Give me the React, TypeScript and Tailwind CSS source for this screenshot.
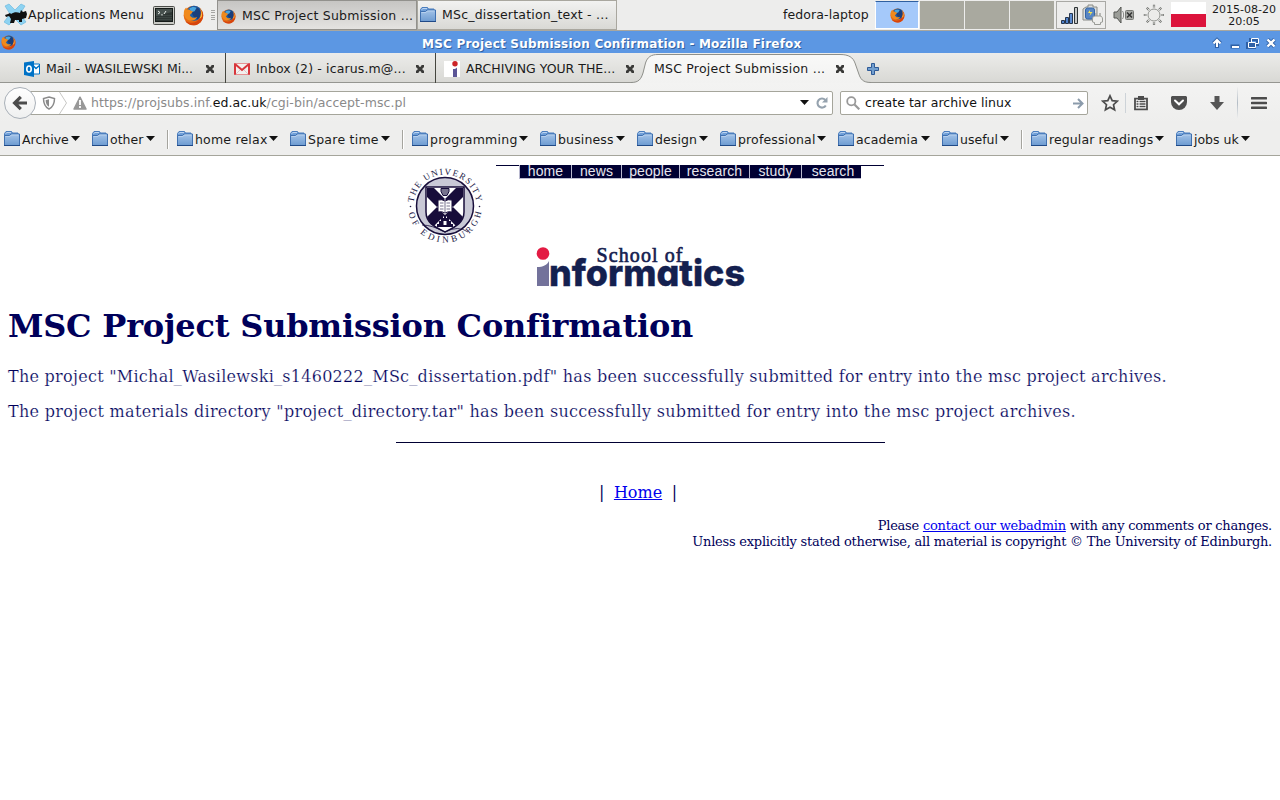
import React from "react";

const Firefox = ({ size }: { size: number }) => (
  <svg width={size} height={size} viewBox="0 0 20 20" className="block shrink-0">
    <circle cx="10" cy="10" r="9.4" fill="#e66a12" />
    <circle cx="10.6" cy="7.8" r="7.2" fill="#1d5fa8" />
    <path d="M8 2.2C12 .6 16 3 16.8 7c.4 3-1 5.4-3 6.6C11 13 9 10 8 7z" fill="#1b3f7c" />
    <path d="M6 3.4C8 1.6 11 1.4 13 2.6L11 6 8 7z" fill="#4aa5dd" />
    <path d="M.8 7C1 5 1.8 3.400 3 2.400l.5 2C5 4.200 6.500 4.500 7.500 5.500L9.500 6.300 8 8.200 6.500 9.500c1 2.500 4 3.500 7 2-1 3-5 4-8 3C2.500 13.500.6 10.500.8 7z" fill="#f08a1c" />
    <path d="M16.600 4c2 2 3 5 2.300 8.200-1 4-4.500 7.200-8.900 7.200-3.500 0-6.500-1.900-8-4.700 3 2.300 7 3 10.400 1.300C16 14 17.600 9.500 16.600 4z" fill="#d6440f" />
    <path d="M16.200 3.400c1.600 3.200 1.500 6.600-.5 9.600 1-.3 1.600-.9 2.200-1.800.5-3-.1-5.800-1.700-7.800z" fill="#ffcb3a" />
  </svg>
);

const Folder = () => (
  <svg width="16" height="16" viewBox="0 0 16 16" className="block shrink-0">
    <defs>
      <linearGradient id="folder" x1="0" y1="0" x2="0" y2="1">
        <stop offset="0" stopColor="#a3c3e8" />
        <stop offset="1" stopColor="#6d9bd1" />
      </linearGradient>
    </defs>
    <path d="M.5 14V2.500L2 .5h5.500L8.500 2h5.500v2" fill="#6f9fd8" stroke="#4a7dbd" />
    <path d="M1.500 2.600 3 1.500h4" stroke="#bdd4f0" fill="none" />
    <path d="M.5 4.500h5l1.500-1.500h8.500v11.500H.5z" fill="url(#folder)" stroke="#3f70b0" />
    <path d="M1.500 5.500h4.500L7.500 4h7" stroke="#b7d0ee" fill="none" />
    <path d="M0 14.500h16" stroke="#204a87" />
  </svg>
);

const Caret = () => (
  <svg width="9" height="5" viewBox="0 0 9 5" className="block shrink-0">
    <path d="M0 0h9L4.500 5z" fill="#111" />
  </svg>
);

const CloseX = () => (
  <svg width="10" height="10" viewBox="0 0 10 10" className="block shrink-0">
    <path d="M2 2.200 8 7.800M8 2.200 2 7.800" stroke="#3a3a38" strokeWidth="2.700" strokeLinecap="butt" />
    <path d="M1 1h2.500v2H1zM6.500 1H9v2H6.500zM1 7h2.500v2H1zM6.500 7H9v2H6.500z" fill="#3a3a38" />
  </svg>
);

const Bookmark = ({ label, box, text }: { label: string; box: string; text: string }) => (
  <div className={`flex shrink-0 items-center ${box}`}>
    <Folder />
    <span className={`ml-[2px] mt-[2px] shrink-0 ${text}`}>{label}</span>
    <span className="-mt-px ml-px">
      <Caret />
    </span>
  </div>
);

const Divider = () => <div className="h-[19px] w-[10px] shrink-0 border-l border-[#a5a49e] shadow-[inset_1px_0_0_#fff]" />;

const Panel = () => (
  <div className="flex h-[31px] shrink-0 border-b border-[#a9a79f] bg-[#ededec]">
    <svg width="24" height="26" viewBox="0 0 24 26" className="ml-[4px] mt-[2px] block shrink-0">
      <path d="M1 4l4-2 6 6 6-6 4 2-5 8 6 8-5 3-6-6-6 6-5-3 6-8z" fill="#8ed3f2" stroke="#62b4dc" strokeWidth=".6" />
      <path d="M4 12l2-1 1 1c3-2 6-2 9-1l1-3 2 2 3-1 1 3-1 4-4 1v3h-3v-2h-4l-1 3H6l1-4-2-3-3 1-1-2z" fill="#111" />
    </svg>
    <span className="w-[124px] shrink-0 pt-[7px] leading-4 tracking-[0.08px]">Applications Menu</span>
    <svg width="22" height="19" viewBox="0 0 22 19" className="ml-[1px] mt-[6px] block shrink-0">
      <rect x=".5" y=".5" width="21" height="18" rx="1" fill="#c9cac5" stroke="#4b4d49" />
      <rect x="2.500" y="2.500" width="17" height="13" fill="#2e3634" stroke="#151b19" />
      <path d="M3 10 19 6V3H3z" fill="#46504d" />
      <path d="m5 5 2 1.500L5 8M8 9h2M11 8l2-3" stroke="#e8eeea" strokeWidth="1" fill="none" />
      <path d="M3 11.500h16M3 13.500h16M3 9.500h16" stroke="#4b5652" strokeWidth=".5" />
    </svg>
    <div className="ml-[8px] mt-[5px]">
      <Firefox size={21} />
    </div>
    <div className="ml-[7px] mt-[10px] flex h-[10px] w-[6px] shrink-0 flex-col justify-between">
      <i className="block h-px w-[4px] bg-[#a5a5a3]" />
      <i className="block h-px w-[4px] bg-[#a5a5a3]" />
      <i className="block h-px w-[4px] bg-[#a5a5a3]" />
      <i className="block h-px w-[4px] bg-[#a5a5a3]" />
      <i className="block h-px w-[4px] bg-[#a5a5a3]" />
    </div>
    <div className="flex h-[30px] w-[200px] shrink-0 border border-[#92918d] bg-linear-to-b from-[#c6c5c3] to-[#e4e3e1] pl-[3px]">
      <div className="mt-[8px]">
        <Firefox size={15} />
      </div>
      <span className="ml-[6px] shrink-0 pt-[7px] leading-4 tracking-[0.22px]">MSC Project Submission ...</span>
    </div>
    <div className="flex h-[30px] w-[200px] shrink-0 border border-[#a9a79f] bg-linear-to-b from-[#f2f2f1] to-[#d9d9d5] pl-[2px]">
      <div className="mt-[6px]">
        <Folder />
      </div>
      <span className="ml-[6px] shrink-0 pt-[6px] leading-4 tracking-[0.21px]">MSc_dissertation_text - ...</span>
    </div>
    <span className="ml-[166px] w-[92px] shrink-0 pt-[7px] leading-4 tracking-[0.1px]">fedora-laptop</span>
    <div className="mt-px flex h-[28px] w-[44px] shrink-0 justify-center border border-white border-t-[#2f5f9f] bg-[#a5c9fa] pt-[6px]">
      <Firefox size={15} />
    </div>
    <div className="mt-px flex h-[28px] w-[137px] shrink-0 gap-px pl-px">
      <i className="block w-[44px] bg-[#a9a99f]" />
      <i className="block w-[44px] bg-[#a9a99f]" />
      <i className="block w-[44px] bg-[#a9a99f]" />
    </div>
    <div className="mt-px flex h-[28px] w-[50px] shrink-0 border border-[#a9a9a5]">
      <svg width="18" height="18" viewBox="0 0 18 18" className="ml-[4px] mt-[5px] block">
        <path d="M.5 13.500h3v3h-3zM4.500 10.500h3v6h-3z" fill="#4f82cc" stroke="#26354c" />
        <path d="M8.500 6.500h3v10h-3z" fill="#5d8cd0" stroke="#26354c" />
        <path d="M13.500.5h3v16h-3z" fill="#c4c6c6" stroke="#2e3436" />
      </svg>
      <svg width="22" height="24" viewBox="0 0 22 24" className="ml-[3px] mt-[2px] block">
        <path d="M4 3h2V1h5v2h4v13H1V5z" fill="#dcdedc" stroke="#888a85" />
        <rect x="3.500" y="4" width="9" height="11" rx="2" fill="#5685c4" stroke="#3465a4" />
        <path d="m8 6-2 3h2.500l-1 3 3-4H8z" fill="#fce94f" />
        <path d="M14 13V9M18 13V9" stroke="#a5a7a2" strokeWidth="1.500" />
        <path d="M10.500 18v-3c0-2 1-3 3-3h4c2 0 3 1 3 3v3l-2 .5v2h-6v-2z" fill="#eeeeec" stroke="#999b96" />
      </svg>
    </div>
    <svg width="22" height="20" viewBox="0 0 22 20" className="ml-[7px] mt-[5px] block shrink-0">
      <path d="M1 7h3l4-5v16l-4-5H1z" fill="#9b9d98" stroke="#555753" />
      <path d="M9.500 6c1.500 2 1.500 6 0 8" fill="none" stroke="#888a85" />
      <rect x="12.500" y="5.500" width="8" height="9" rx="1" fill="#a7a9a5" stroke="#777975" />
      <path d="m14 7.500 5 5m0-5-5 5" stroke="#333" strokeWidth="1.500" />
    </svg>
    <svg width="22" height="22" viewBox="0 0 22 22" className="ml-[8px] mt-[4px] block shrink-0">
      <path d="M11 .8v3M11 18v3M.8 11h3M18 11h3M3.800 3.800l2.200 2.200M16 16l2.200 2.200M3.800 18.200 6 16M16 6l2.200-2.200" stroke="#70726e" strokeWidth="2.200" />
      <path d="M11 1.400v3M11 18v2.400M1.400 11h3M18 11h2.400M4.300 4.300 6 6M16 16l1.700 1.700M4.300 17.700 6 16M16 6l1.700-1.700" stroke="#fff" strokeWidth=".8" />
      <circle cx="11" cy="11" r="6" fill="#ececea" stroke="#91938f" />
    </svg>
    <div className="ml-[6px] mt-[2px] h-[25px] w-[35px] shrink-0 bg-linear-to-b from-white from-50% to-[#dc143c] to-50%" />
    <div className="ml-[5px] w-[66px] shrink-0 pt-[4px] text-center text-[11px] leading-[12px]">
      2015-08-20
      <br />
      20:05
    </div>
  </div>
);

const TitleBar = () => (
  <div className="flex h-[22px] shrink-0 bg-[#5c97e3]">
    <div className="ml-px mt-[4px] w-[421px]">
      <Firefox size={15} />
    </div>
    <span className="shrink-0 pt-[5px] text-[12px] leading-4 font-bold tracking-[0.21px] text-white [text-shadow:1px_1px_0_#32619f]">
      MSC Project Submission Confirmation - Mozilla Firefox
    </span>
    <svg width="70" height="14" viewBox="0 0 70 14" className="ml-auto mr-[2px] mt-[5px] block shrink-0" fill="none">
      <path d="M9 12V5M5.500 7.500 9 4l3.500 3.500" stroke="#2f60a5" strokeWidth="4" />
      <path d="M22.500 10.500h9" stroke="#2f60a5" strokeWidth="4" />
      <path d="M42.500 3.500h7v5h-7zM39.500 7.500h7v4h-7z" stroke="#2f60a5" strokeWidth="3" />
      <path d="m59.500 3.500 7 7m0-7-7 7" stroke="#2f60a5" strokeWidth="4" />
      <path d="M9 11V5M5.500 7.500 9 4l3.500 3.500" stroke="#fff" strokeWidth="2" />
      <path d="M24 11h7" stroke="#fff" strokeWidth="2" />
      <path d="M43.500 2.500h7v5h-7z" stroke="#fff" />
      <path d="M40.500 6.500h7v5h-7z" stroke="#fff" fill="#2f60a5" />
      <path d="m59.500 3.500 7 7m0-7-7 7" stroke="#fff" strokeWidth="2.400" />
    </svg>
  </div>
);

const TabStrip = () => (
  <div className="relative flex h-[30px] shrink-0 bg-linear-to-b from-[#ececea] to-[#d8d8d4] shadow-[inset_0_-1px_0_#959691]">
    <div className="flex w-[226px] shrink-0 border-r border-[#45463f] pl-[24px]">
      <svg width="16" height="16" viewBox="0 0 16 16" className="mt-[8px] block shrink-0">
        <path d="M8 3h7.500v10H8z" fill="#fff" stroke="#0072c6" />
        <path d="m9 4.500 3 3 3.500-3" fill="none" stroke="#0072c6" strokeWidth="1.500" />
        <path d="M0 1.500 10 0v16L0 14z" fill="#0072c6" />
        <ellipse cx="5" cy="8" rx="2.200" ry="3" fill="none" stroke="#fff" strokeWidth="1.600" />
      </svg>
      <span className="ml-[6px] w-[159px] shrink-0 pt-[8px] leading-4 tracking-[-0.08px] [word-spacing:0.6px]">Mail - WASILEWSKI Mi...</span>
      <span className="mt-[11px]"><CloseX /></span>
    </div>
    <div className="flex w-[210px] shrink-0 border-r border-[#45463f] pl-[8px]">
      <svg width="16" height="12" viewBox="0 0 16 12" className="mt-[10px] block shrink-0">
        <path d="M0 0h16v12H0z" fill="#f4f0ee" />
        <path d="M1 12V1l7 6 7-6v11" fill="none" stroke="#d8363b" strokeWidth="2" />
        <path d="m2 11 4-4m8 4-4-4" stroke="#d4cccc" />
        <path d="M0 .5h16M0 11.500h16" stroke="#e0696c" strokeWidth=".7" />
      </svg>
      <span className="ml-[6px] w-[159px] shrink-0 pt-[8px] leading-4 tracking-[0.14px]">Inbox (2) - icarus.m@...</span>
      <span className="mt-[11px]"><CloseX /></span>
    </div>
    <div className="flex w-[210px] shrink-0 pl-[8px]">
      <svg width="16" height="16" viewBox="0 0 16 16" className="mt-[8px] block shrink-0">
        <path d="M0 0h16v16H0z" fill="#fff" />
        <circle cx="11" cy="2.800" r="2.700" fill="#cc2428" />
        <path d="M9 8c2 0 3-.5 4-1.500V16H9z" fill="#5c5696" />
      </svg>
      <span className="ml-[6px] w-[159px] shrink-0 pt-[8px] leading-4">ARCHIVING YOUR THE...</span>
      <span className="mt-[11px]"><CloseX /></span>
    </div>
    <svg width="240" height="30" viewBox="0 0 240 30" className="absolute left-[631px] top-0 block">
      <defs>
        <linearGradient id="tab" x1="0" y1="0" x2="0" y2="1">
          <stop offset="0" stopColor="#f9f9f8" />
          <stop offset="1" stopColor="#f2f2f1" />
        </linearGradient>
      </defs>
      <path d="M0 29.500C8 29.500 10 26 12 20l2.500-10C16.500 4 20 1.500 27 1.500H209c9 0 13 3 15 8.500l3.500 10c2 6 4 9.500 12.500 9.500V30H0z" fill="url(#tab)" />
      <path d="M0 29.500C8 29.500 10 26 12 20l2.500-10C16.500 4 20 1.500 27 1.500H209c9 0 13 3 15 8.500l3.500 10c2 6 4 9.500 12.500 9.500" fill="none" stroke="#8e8f8a" />
    </svg>
    <div className="relative flex w-[221px] shrink-0 pl-[8px]">
      <span className="w-[181px] shrink-0 pt-[8px] leading-4 tracking-[0.22px]">MSC Project Submission ...</span>
      <span className="mt-[11px]"><CloseX /></span>
    </div>
    <svg width="12" height="12" viewBox="0 0 12 12" className="mt-[10px] block shrink-0">
      <path d="M4.500.5h3v4h4v3h-4v4h-3v-4h-4v-3h4z" fill="#729fcf" stroke="#2f5a96" />
    </svg>
  </div>
);

const NavBar = () => (
  <div className="flex h-[40px] shrink-0 items-center bg-linear-to-b from-[#f3f3f2] to-[#eeeeed]">
    <div className="relative z-10 ml-[4px] flex size-[32px] shrink-0 items-center justify-center rounded-full border border-[#a9b0b8] bg-linear-to-b from-white to-[#eff0f0]">
      <svg width="16" height="16" viewBox="0 0 16 16" className="block">
        <path d="M15 8H4M8.800 1.800 2.600 8l6.200 6.200" fill="none" stroke="#4c4c4c" strokeWidth="3.200" />
      </svg>
    </div>
    <div className="-ml-[6px] flex h-[24px] w-[803px] shrink-0 items-center rounded-r-[2px] border border-[#a5a59b] bg-white pl-[11px]">
      <svg width="14" height="14" viewBox="0 0 14 14" className="block shrink-0">
        <path d="M7 1 12.500 2.500c0 5-1.500 8.500-5.500 10.500C3 11 1.500 7.500 1.500 2.500z" fill="#fff" stroke="#8b8b8b" strokeWidth="1.500" />
        <path d="M7 3.300v7.500C4.800 9.500 3.700 7.500 3.600 4.200z" fill="#8b8b8b" />
      </svg>
      <svg width="9" height="22" viewBox="0 0 9 22" className="ml-[3px] block shrink-0">
        <path d="M.5 0 7.500 11 .5 22" fill="none" stroke="#c7c7c5" />
      </svg>
      <svg width="14" height="14" viewBox="0 0 14 14" className="ml-[5px] block shrink-0">
        <path d="M7 1.200 13 13H1z" fill="#989898" stroke="#989898" strokeWidth="1.500" strokeLinejoin="round" />
        <path d="M6.100 4h1.800v5H6.100zM6.100 10h1.800v2H6.100z" fill="#fff" />
      </svg>
      <span className="ml-[4px] mt-px shrink-0 tracking-[0.065px] text-[#8a8a8a]">
        https://projsubs.inf.<span className="text-[#111]">ed.ac.uk</span>/cgi-bin/accept-msc.pl
      </span>
      <span className="ml-auto mr-[7px] -mt-[2px]"><Caret /></span>
      <svg width="12" height="12" viewBox="0 0 12 12" className="mr-[4px] block shrink-0">
        <path d="M9.800 8.500A4.500 4.500 0 1 1 9.300 3" fill="none" stroke="#95a2ae" strokeWidth="2.100" />
        <path d="M11.500 0v5.500H6z" fill="#95a2ae" />
      </svg>
    </div>
    <div className="ml-[7px] flex h-[24px] w-[248px] shrink-0 items-center rounded-[2px] border border-[#a5a59b] bg-white pl-[5px]">
      <svg width="14" height="14" viewBox="0 0 14 14" className="block shrink-0" fill="none" stroke="#999">
        <circle cx="5.300" cy="5.300" r="4.100" strokeWidth="1.800" />
        <path d="m8.500 8.500 4.800 4.800" strokeWidth="2.200" />
      </svg>
      <span className="ml-[5px] mt-px shrink-0 tracking-[0.04px] text-[#111]">create tar archive linux</span>
      <svg width="11" height="11" viewBox="0 0 11 11" className="ml-auto mr-[3px] block shrink-0">
        <path d="M0 5.500h9M5 1l4.500 4.500L5 10" fill="none" stroke="#8b9bab" strokeWidth="2" />
      </svg>
    </div>
    <svg width="18" height="18" viewBox="0 0 18 18" className="ml-[13px] block shrink-0">
      <path d="m9 1.800 2.200 4.800 5.100.6-3.800 3.500 1.100 5.100L9 13.200l-4.600 2.600 1.100-5.100L1.700 7.200l5.100-.6z" fill="none" stroke="#4c4c4c" strokeWidth="1.700" strokeLinejoin="miter" />
    </svg>
    <div className="ml-[6px] h-[20px] w-px shrink-0 bg-[#cdd3d8]" />
    <svg width="16" height="16" viewBox="0 0 16 16" className="ml-[7px] block shrink-0">
      <path d="M2 3.700h12v10.600H2z" fill="#fff" stroke="#4c4c4c" strokeWidth="1.800" />
      <path d="M5 1h6v4H5z" fill="#4c4c4c" />
      <path d="M3.500 6.500h2M6.500 6.500h6M3.500 9h2M6.500 9h6M3.500 11.500h2M6.500 11.500h6" stroke="#4c4c4c" strokeWidth="1.300" />
    </svg>
    <svg width="18" height="16" viewBox="0 0 18 16" className="ml-[21px] block shrink-0">
      <path d="M2 1h14l1 1v5a8 8 0 0 1-16 0V2z" fill="#4f4f4f" />
      <path d="m5 5.500 4 3.800 4-3.800" fill="none" stroke="#fff" strokeWidth="2" strokeLinecap="round" />
    </svg>
    <svg width="16" height="16" viewBox="0 0 16 16" className="ml-[21px] block shrink-0">
      <path d="M5.500 1h5v6h4.500L8 15 1 7h4.500z" fill="#565656" />
    </svg>
    <div className="ml-[12px] h-[32px] w-px shrink-0 bg-linear-to-b from-[#f0f0ef] via-[#b3bcc5] to-[#f0f0ef]" />
    <svg width="16" height="14" viewBox="0 0 16 14" className="ml-[13px] block shrink-0">
      <path d="M1 2.300h14M1 7h14M1 11.700h14" stroke="#4c4c4c" strokeWidth="2.600" strokeLinecap="round" />
    </svg>
  </div>
);

const BookmarksBar = () => (
  <div className="flex h-[33px] shrink-0 items-center border-b border-[#a5a59b] bg-[#eeeeed] pl-[4px]">
    <Bookmark label="Archive" box="w-[88px]" text="w-[48px]" />
    <Bookmark label="other" box="w-[75px]" text="w-[35px]" />
    <Divider />
    <Bookmark label="home relax" box="w-[113px]" text="w-[73px] tracking-[0.2px]" />
    <Bookmark label="Spare time" box="w-[112px]" text="w-[72px] tracking-[0.25px]" />
    <Divider />
    <Bookmark label="programming" box="w-[128px]" text="w-[88px] tracking-[0.25px]" />
    <Bookmark label="business" box="w-[97px]" text="w-[57px] tracking-[0.15px]" />
    <Bookmark label="design" box="w-[83px]" text="w-[43px] tracking-[0.1px]" />
    <Bookmark label="professional" box="w-[118px]" text="w-[78px] tracking-[0.15px]" />
    <Bookmark label="academia" box="w-[104px]" text="w-[64px] tracking-[0.1px]" />
    <Bookmark label="useful" box="w-[79px]" text="w-[39px]" />
    <Divider />
    <Bookmark label="regular readings" box="w-[145px]" text="w-[105px] tracking-[0.1px]" />
    <Bookmark label="jobs uk" box="w-[90px]" text="w-[46px]" />
  </div>
);

const Seal = () => (
  <svg width="88" height="88" viewBox="-6 -6 88 88" className="-ml-[6px] -mt-[3px] block shrink-0">
    <defs>
      <path id="arcTop" d="M6.700 34.500A31.500 31.500 0 0 1 69.300 34.500" />
      <path id="arcBottom" d="M1.400 43A37 37 0 0 0 74.600 43" />
    </defs>
    <circle cx="38" cy="38" r="28.500" fill="#c9c9d6" stroke="#170d3a" strokeWidth="1.500" />
    <path d="M19 19h38v25c0 11-9 15-19 20-10-5-19-9-19-20z" fill="#fff" stroke="#170d3a" strokeWidth="1.500" />
    <path d="M20 20h7l29 29-3 6-4 3-29-29zM56 20h-7L20 49l3 6 4 3 29-29z" fill="#170d3a" />
    <path d="M34 20.500h8v3l-2 4h-4l-2-4z" fill="#77738d" stroke="#170d3a" />
    <path d="M31 32q4-1 7 1 3-2 7-1v12q-4-1-7 1-3-2-7-1z" fill="#fff" stroke="#170d3a" />
    <path d="M38 33v11M33 35h3.500M33 38h3.500M33 41h3.500M39.500 35H43M39.500 38H43M39.500 41H43" stroke="#77738d" />
    <path d="M34 48h2v2h1v-3h2v3h1v-2h2v5h2v3h2v3H30v-3h2v-3h2z" fill="#170d3a" />
    <path d="M36.500 53h3v4h-3z" fill="#fff" />
    <path d="M15 57q10 0 23 7 13-7 23 0" fill="none" stroke="#170d3a" strokeWidth=".8" />
    <circle cx="3.500" cy="38.500" r=".8" fill="#241c48" />
    <circle cx="72.500" cy="38.500" r=".8" fill="#241c48" />
    <text fontFamily="Liberation Serif, serif" fontSize="9" fill="#241c48">
      <textPath href="#arcTop" textLength="91">THE UNIVERSITY</textPath>
    </text>
    <text fontFamily="Liberation Serif, serif" fontSize="9" fill="#241c48">
      <textPath href="#arcBottom" startOffset="2" textLength="102">OF EDINBURGH</textPath>
    </text>
  </svg>
);

const SchoolLogo = () => (
  <svg width="220" height="60" viewBox="0 -6 220 60" className="-mt-[6px] block">
    <circle cx="8" cy="7.500" r="6.300" fill="#e31b43" />
    <path d="M2 21c6 0 10-2 12-6v25H2z" fill="#73729b" />
    <text x="61.500" y="15.500" textLength="86" fontFamily="Liberation Serif, serif" fontSize="20" fill="#14204f" stroke="#14204f" strokeWidth=".6">School of</text>
    <text x="14" y="40" textLength="196" lengthAdjust="spacingAndGlyphs" fontFamily="Inter, Lato, sans-serif" fontWeight="800" fontSize="37" fill="#14204f" stroke="#14204f" strokeWidth=".4" className="[font-feature-settings:'cv11'_1,'ss03'_1,'ss07'_0]">nformatics</text>
  </svg>
);

const SiteNav = () => (
  <div className="ml-[12px] flex h-[14px] w-[388px] border-t border-[#000033] pl-[23px] font-['Liberation_Sans',sans-serif] text-[14px] leading-[13px] tracking-[0.1px] text-[#e6e6ee]">
    <span className="-mt-px h-[14px] w-[53px] border-x border-b border-[#b9b9cf] bg-[#000033] text-center">home</span>
    <span className="-mt-px h-[14px] w-[50px] border-r border-b border-[#b9b9cf] bg-[#000033] text-center">news</span>
    <span className="-mt-px h-[14px] w-[58px] border-r border-b border-[#b9b9cf] bg-[#000033] text-center">people</span>
    <span className="-mt-px h-[14px] w-[70px] border-r border-b border-[#b9b9cf] bg-[#000033] text-center">research</span>
    <span className="-mt-px h-[14px] w-[52px] border-r border-b border-[#b9b9cf] bg-[#000033] text-center">study</span>
    <span className="-mt-px h-[14px] w-[59px] border-b border-[#b9b9cf] bg-[#000033] pl-[3px] text-center">search</span>
  </div>
);

export default function App() {
  return (
    <div className="flex h-[800px] w-[1280px] flex-col overflow-hidden whitespace-nowrap bg-white font-['DejaVu_Sans',sans-serif] text-[12.500px] text-[#1a1a1a]">
      <Panel />
      <TitleBar />
      <TabStrip />
      <NavBar />
      <BookmarksBar />
      <main className="flex flex-col px-[8px] pt-[9px] font-['DejaVu_Serif',serif] text-[16px] text-[#00005a]">
        <div className="ml-[399px] flex h-[81px]">
          <Seal />
          <div className="-ml-[5px]">
            <SiteNav />
          </div>
        </div>
        <div className="ml-[527px] h-[44px]">
          <SchoolLogo />
        </div>
        <h1 className="mt-[17px] text-[32px] leading-[38px] font-bold tracking-[-0.21px]">MSC Project Submission Confirmation</h1>
        <p className="mt-[22px] leading-[19px] tracking-[0.27px] [-webkit-text-stroke:0.2px_white]">
          The project "Michal_Wasilewski_s1460222_MSc_dissertation.pdf" has been successfully submitted for entry into the msc project archives.
        </p>
        <p className="mt-[16px] leading-[19px] tracking-[0.303px] [-webkit-text-stroke:0.2px_white]">
          The project materials directory "project_directory.tar" has been successfully submitted for entry into the msc project archives.
        </p>
        <div className="ml-[388px] mt-[21px] h-px w-[489px] bg-[#000033]" />
        <div className="ml-[591px] mt-[40px] flex leading-[19px]">
          <span>|</span>
          <a className="ml-[9.500px] text-[#0000ee] underline">Home</a>
          <span className="ml-[9.500px]">|</span>
        </div>
        <div className="mt-[16px] text-right text-[13px] leading-[16px] tracking-[-0.24px]">
          Please <a className="text-[#0000ee] underline">contact our webadmin</a> with any comments or changes.
          <br />
          Unless explicitly stated otherwise, all material is copyright © The University of Edinburgh.
        </div>
      </main>
    </div>
  );
}
